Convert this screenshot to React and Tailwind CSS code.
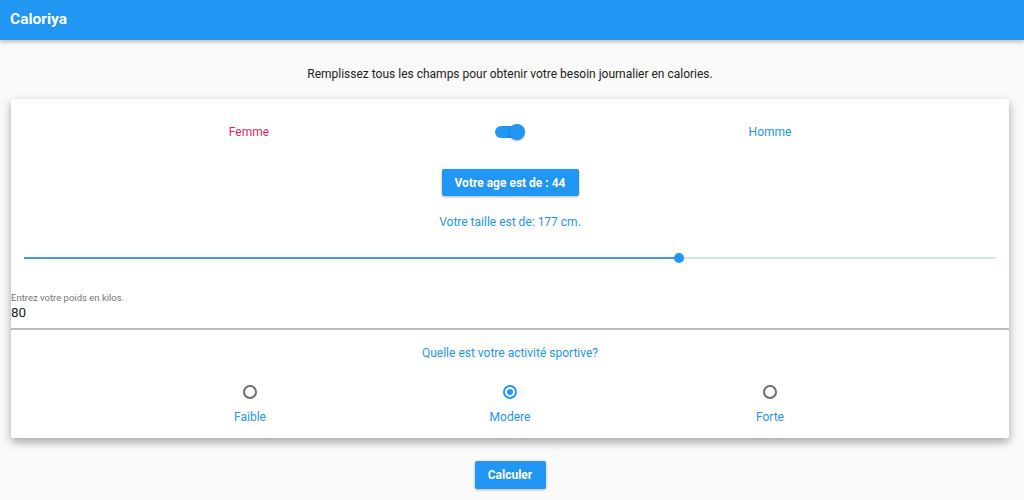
import React from "react";

function Radio({ checked }) {
  return checked ? (
    <div className="w-[14px] h-[14px] rounded-full border-2 border-[#2196f3] flex items-center justify-center">
      <div className="w-[6px] h-[6px] rounded-full bg-[#2196f3]" />
    </div>
  ) : (
    <div className="w-[14px] h-[14px] rounded-full border-2 border-[#6b6b6b]" />
  );
}

export default function App() {
  const font = { fontFamily: "Roboto, 'Liberation Sans', sans-serif" };
  return (
    <div className="w-[1024px] h-[500px] bg-[#fafafa] overflow-hidden flex flex-col" style={font}>
      <div className="h-[40px] bg-[#2196f3] flex items-center px-[10px] shadow-[0_2px_4px_rgba(0,0,0,0.25)] relative z-10">
        <span className="text-white font-bold text-[15.5px]">Caloriya</span>
      </div>
      <div className="flex flex-col">
        <div className="h-[24px] mt-[22px] text-[12px] text-[#212121] flex items-center justify-center pr-[4px]">
          Remplissez tous les champs pour obtenir votre besoin journalier en calories.
        </div>
        <div className="mt-[13px] ml-[11px] w-[998px] h-[339px] bg-white rounded-[2px] shadow-[0_4px_10px_rgba(0,0,0,0.35)] flex flex-col">
          <div className="flex justify-center mt-[20px] h-[26px] items-center">
            <div className="w-[260px] flex justify-center text-[12px] text-[#e91e63] pr-[2px]">Femme</div>
            <div className="w-[260px] flex justify-center">
              <div className="relative w-[30px] h-[16px] flex items-center">
                <div className="w-[26px] h-[12px] rounded-full bg-[#2196f3]" />
                <div className="absolute right-0 w-[16px] h-[16px] rounded-full bg-[#2196f3] shadow-[0_1px_2px_rgba(0,0,0,0.3)]" />
              </div>
            </div>
            <div className="w-[260px] flex justify-center text-[12px] text-[#2196f3]">Homme</div>
          </div>
          <div className="flex justify-center mt-[24px]">
            <div className="w-[137px] h-[27px] bg-[#2196f3] rounded-[2px] shadow-[0_1px_3px_rgba(0,0,0,0.3)] flex items-center justify-center text-white font-bold text-[12px]">
              Votre age est de : 44
            </div>
          </div>
          <div className="flex justify-center mt-[17px] text-[12px] text-[#2196f3]">
            Votre taille est de: 177 cm.
          </div>
          <div className="mx-[13px] mt-[20px] h-[14px] flex items-center relative">
            <div className="h-[2px] w-[655px] bg-[#4a98d8]" />
            <div className="h-[2px] flex-1 bg-[#cfe3f5]" />
            <div className="absolute left-[650px] w-[10px] h-[10px] rounded-full bg-[#2196f3]" />
          </div>
          <div className="mt-[27px] text-[9.5px] text-[#757575] leading-[12px]">Entrez votre poids en kilos.</div>
          <div className="text-[13.5px] text-[#212121] leading-[16px]">80</div>
          <div className="mt-[8px] h-[1.5px] bg-[#bdbdbd]" />
          <div className="flex justify-center mt-[14px] text-[12px] text-[#2196f3]">
            Quelle est votre activité sportive?
          </div>
          <div className="flex justify-center mt-[23px]">
            {[["Faible", false], ["Modere", true], ["Forte", false]].map(([l, c]) => (
              <div key={l} className="w-[260px] flex flex-col items-center">
                <Radio checked={c} />
                <div className="mt-[9px] text-[12px] text-[#2196f3]">{l}</div>
              </div>
            ))}
          </div>
        </div>
        <div className="mt-[23px] self-center mr-[4px] w-[71px] h-[28px] bg-[#2196f3] rounded-[2px] shadow-[0_1px_3px_rgba(0,0,0,0.3)] flex items-center justify-center text-white font-bold text-[12px]">
          Calculer
        </div>
      </div>
    </div>
  );
}
